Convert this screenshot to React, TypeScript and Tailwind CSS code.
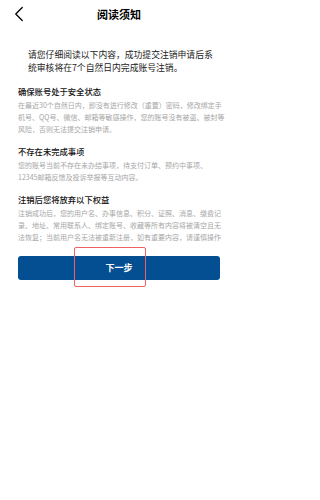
import { ChevronLeft } from "lucide-react";

const sections = [
  {
    title: "确保账号处于安全状态",
    lines: [
      "在最近30个自然日内，即没有进行修改（重置）密码，修改绑定手",
      "机号、QQ号、微信、邮箱等敏感操作，您的账号没有被盗、被封等",
      "风险，否则无法提交注销申请。",
    ],
  },
  {
    title: "不存在未完成事项",
    lines: [
      "您的账号当前不存在未办结事项，待支付订单、预约中事项、",
      "12345邮箱反馈及投诉举报等互动内容。",
    ],
  },
  {
    title: "注销后您将放弃以下权益",
    lines: [
      "注销成功后，您的用户名、办事信息、积分、证照、消息、缴费记",
      "录、地址、常用联系人、绑定账号、收藏等所有内容将被清空且无",
      "法恢复；当前用户名无法被重新注册，如有重要内容，请谨慎操作",
    ],
  },
];

export default function App() {
  return (
    <div
      className="w-[238px] h-[500px] bg-white overflow-hidden"
      style={{ fontFamily: '"Noto Sans CJK SC", "Noto Sans", sans-serif' }}
    >
      {/* header */}
      <div className="relative h-[28px] flex items-center justify-center">
        <button className="absolute left-[6px] top-[1px] text-black">
          <ChevronLeft className="w-[26px] h-[26px]" strokeWidth={1.2} />
        </button>
        <h1 className="text-[11px] font-bold text-black leading-none">阅读须知</h1>
      </div>

      {/* intro */}
      <p className="mt-[20px] pl-[28px] pr-[10px] text-[8.8px] leading-[13px] text-[#222] whitespace-nowrap">
        请您仔细阅读以下内容，成功提交注销申请后系
        <br />
        统审核将在7个自然日内完成账号注销。
      </p>

      <div className="pl-[18px] pr-[10px] mt-[11px] flex flex-col gap-[10px]">
        {sections.map((s) => (
          <div key={s.title}>
            <h2 className="text-[8.3px] leading-[12px] font-medium text-[#111]">{s.title}</h2>
            <p className="mt-[2px] text-[7px] leading-[12px] text-[#a6a6a6] whitespace-nowrap">
              {s.lines.map((l, i) => (
                <span key={i}>
                  {l}
                  {i < s.lines.length - 1 && <br />}
                </span>
              ))}
            </p>
          </div>
        ))}
      </div>

      <div className="px-[18px] mt-[13px]">
        <div className="relative">
          <button className="w-full h-[24px] rounded-[3px] bg-[#044f91] text-white text-[9px] font-bold flex items-center justify-center">
            下一步
          </button>
          <div className="absolute left-[56px] top-[-9px] w-[72px] h-[40px] border border-[#f06262] rounded-[2px] pointer-events-none" />
        </div>
      </div>
    </div>
  );
}
